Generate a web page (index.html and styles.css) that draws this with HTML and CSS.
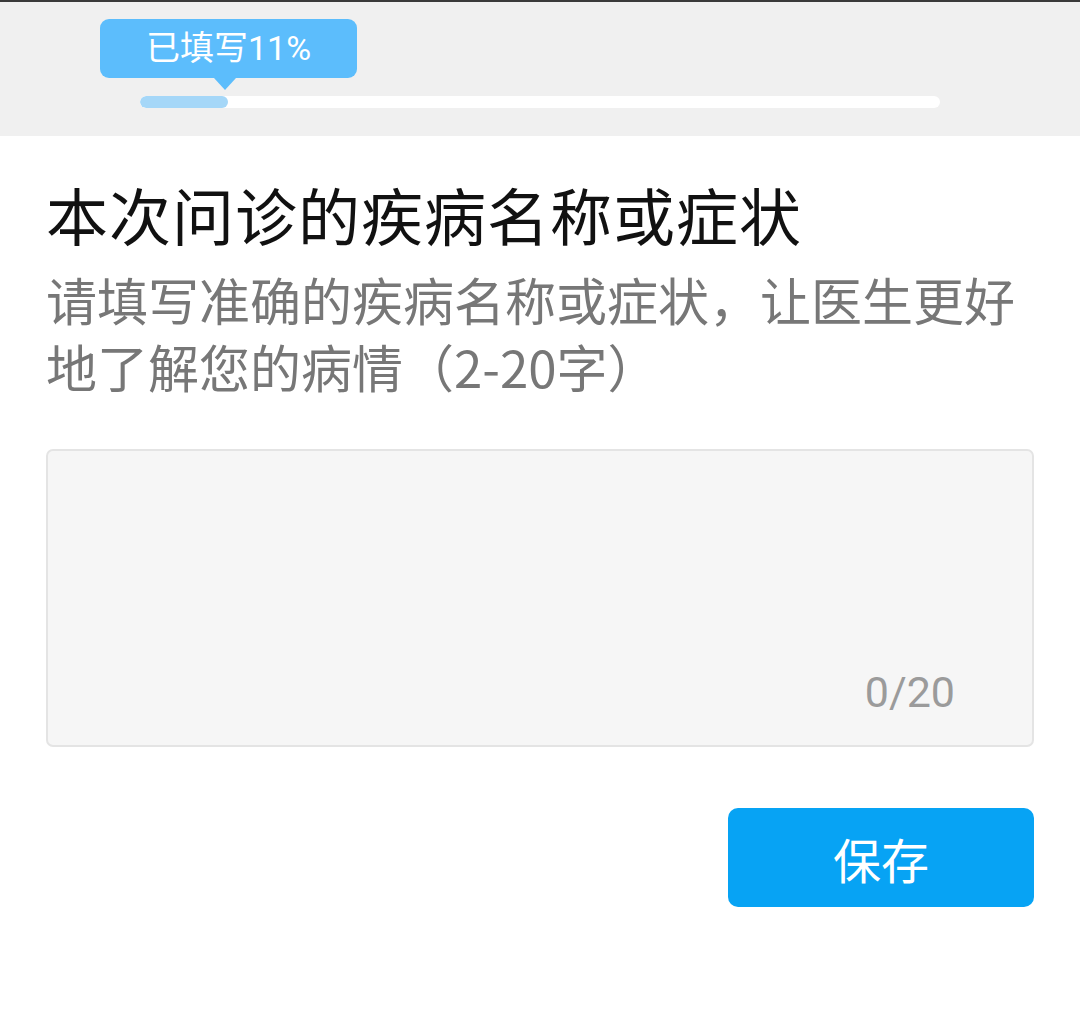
FILE: index.html
```html
<!DOCTYPE html>
<html lang="zh-CN">
<head>
<meta charset="utf-8">
<title>本次问诊的疾病名称或症状</title>
<link rel="stylesheet" href="styles.css">
</head>
<body>
<header class="progress-header">
  <div class="tip">已填写11%</div>
  <div class="track"><div class="fill" style="width: 11%"></div></div>
</header>
<main class="content">
  <h1 class="title">本次问诊的疾病名称或症状</h1>
  <p class="desc">请填写准确的疾病名称或症状，让医生更好地了解您的病情（2-20字）</p>
  <div class="input-box">
    <span class="counter">0/20</span>
  </div>
  <div class="actions">
    <button class="save-btn">保存</button>
  </div>
</main>
</body>
</html>
```

FILE: styles.css
```css
html, body {
  margin: 0;
  padding: 0;
  background: #ffffff;
}
body {
  font-family: "Noto Sans CJK SC", "Noto Sans", Roboto, sans-serif;
  border-top: 2px solid #3a3a3a;
}
.progress-header {
  background: #f0f0f0;
  padding: 17px 0 28px 0;
  display: flex;
  flex-direction: column;
}
.tip {
  position: relative;
  margin-left: 100px;
  width: 257px;
  height: 59px;
  box-sizing: border-box;
  background: #5cbdfc;
  border-radius: 9px;
  color: #ffffff;
  font-family: Roboto, "Noto Sans CJK SC", sans-serif;
  font-size: 34px;
  line-height: 59px;
  text-align: center;
}
.tip::after {
  content: "";
  position: absolute;
  left: 114px;
  top: 59px;
  border-left: 11px solid transparent;
  border-right: 11px solid transparent;
  border-top: 12px solid #5cbdfc;
}
.track {
  margin-top: 18px;
  margin-left: 140px;
  width: 800px;
  height: 12px;
  background: #ffffff;
  border-radius: 6px;
  overflow: hidden;
}
.fill {
  height: 100%;
  background: #a5d7f8;
  border-radius: 6px;
}
.content {
  padding: 38px 46px 0 46px;
  display: flex;
  flex-direction: column;
}
.title {
  margin: 0;
  font-size: 62px;
  line-height: 80px;
  letter-spacing: 1px;
  font-weight: normal;
  color: #111111;
}
.desc {
  margin: 12px 0 0 0;
  font-size: 51px;
  line-height: 67px;
  color: #777777;
}
.input-box {
  margin-top: 49px;
  height: 298px;
  box-sizing: border-box;
  background: #f6f6f6;
  border: 2px solid #e4e4e4;
  border-radius: 7px;
  display: flex;
  flex-direction: column;
  justify-content: flex-end;
  align-items: flex-end;
  padding: 0 77px 31px 0;
}
.counter {
  font-family: Roboto, "Noto Sans", sans-serif;
  font-size: 43px;
  line-height: 43px;
  color: #9b9b9b;
}
.actions {
  margin-top: 61px;
  display: flex;
  justify-content: flex-end;
}
.save-btn {
  width: 306px;
  height: 99px;
  border: none;
  border-radius: 10px;
  background: #07a3f4;
  color: #ffffff;
  font-family: "Noto Sans CJK SC", sans-serif;
  font-size: 48px;
  padding: 0;
}
```
